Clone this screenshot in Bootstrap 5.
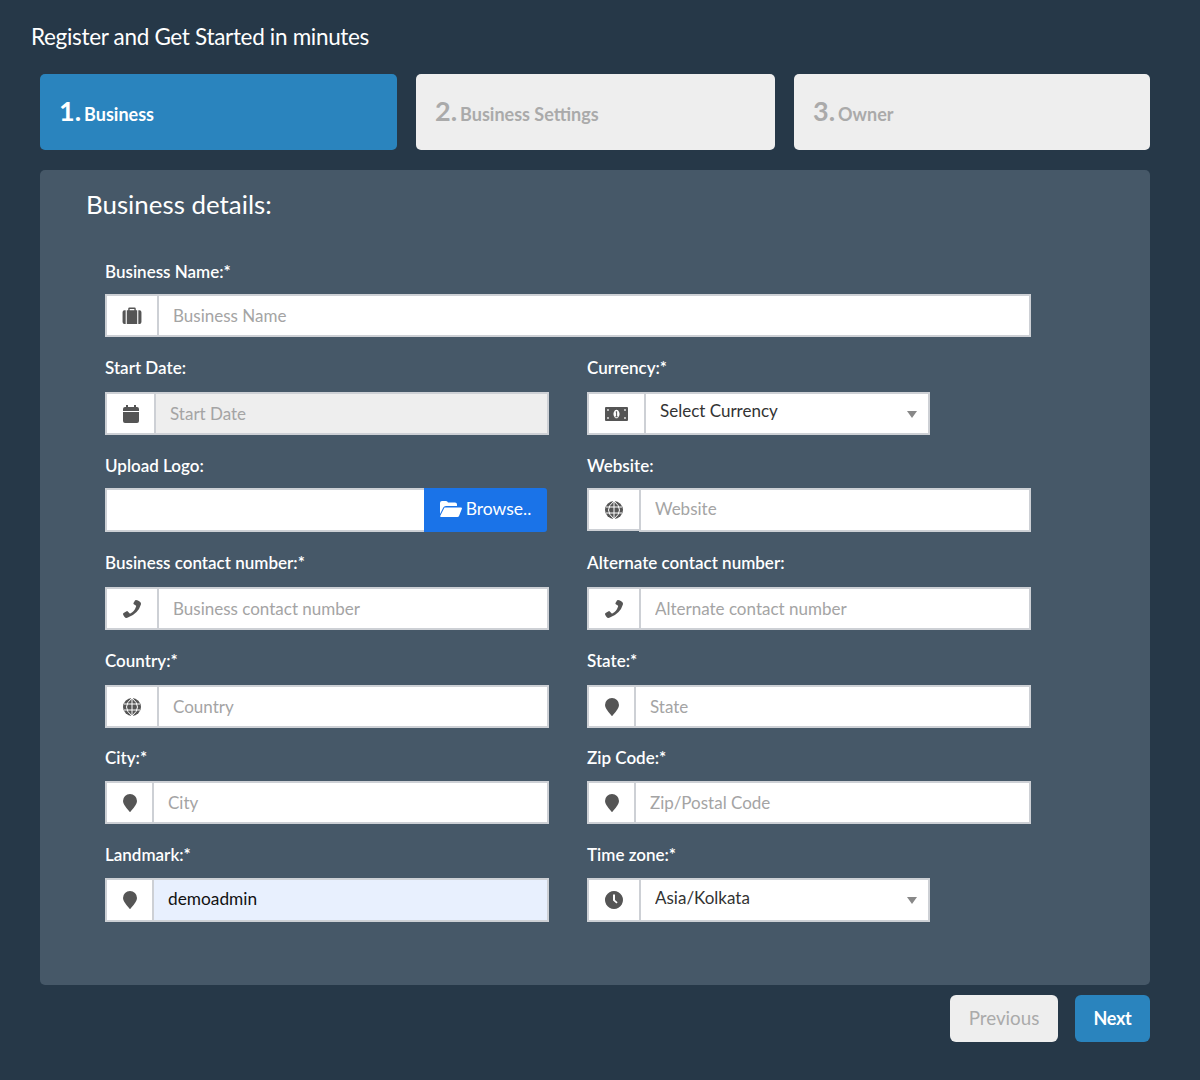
<!DOCTYPE html>
<html lang="en">
<head>
<meta charset="utf-8">
<title>Register</title>
<link href="https://cdn.jsdelivr.net/npm/bootstrap@5.3.0/dist/css/bootstrap.min.css" rel="stylesheet">
<style>
body{background:#263848;font-family:"Lato","Liberation Sans",sans-serif;color:#fff;min-height:1080px}
.page-wrap{padding:22px 50px 0 31px}
.page-title{font-size:22.5px;font-weight:400;line-height:30px;margin:0 0 22px;color:#fff;letter-spacing:-.32px}
.step-area{margin-left:9px}
.step-grid{display:grid;grid-template-columns:357px 359px 356px;gap:19px;margin-bottom:20px}
.step-box{height:76px;border-radius:5px;background:#eee;color:#aaa;display:flex;align-items:center;padding:1px 19px 0;font-weight:700;font-size:18px}
.step-box.is-on{background:#2a84be;color:#fff}
.step-num{font-size:27px;margin-right:3px;line-height:1}
.form-panel{background:#465868;border-radius:5px;height:815px;padding:15px 100px 0 46px}
.panel-title{font-size:25.9px;font-weight:400;line-height:38px;margin:0 0 39px}
.form-rows{--bs-gutter-x:38px}
.fld{font-size:17px;margin-bottom:21px}
.fld-near{margin-bottom:20px}
.fld label{display:block;font-weight:600;line-height:20px;margin-bottom:13px;color:#fff}
.tall-lab label{margin-bottom:14px}
.tight-lab label{margin-bottom:12px}
.iwrap{height:43px;flex-wrap:nowrap}
.iwrap-44{height:44px}
.iwrap .input-group-text{background:#fff;border:2px solid #cdd0d5;border-right-width:0;border-radius:0;padding:0;justify-content:center;color:#555;height:100%}
.iwrap .ad-short{height:43px}
.iwrap .form-control,.iwrap .form-select{border:2px solid #cdd0d5;border-radius:0;height:100%;font-size:17px;padding:0 14px 1px;box-shadow:none;margin-left:0!important;color:#333;font-family:inherit}
.iwrap-44 .form-control{padding-bottom:3px}
.iwrap .form-control::placeholder{color:#a4a4a4;opacity:1}
.iwrap .form-control[disabled]{background:#eee}
.iwrap .form-select{padding-bottom:5px;background-image:url("data:image/svg+xml,%3Csvg xmlns='http://www.w3.org/2000/svg' width='10' height='7'%3E%3Cpath d='M0 0h10L5 7z' fill='%23888'/%3E%3C/svg%3E");background-size:10px 7px;background-position:right 11px top 17px}
.iwrap .filled{background:#e8f0fe;color:#111;font-size:17.3px}
.ad-47{width:47px}.ad-49{width:49px}.ad-52{width:52px}.ad-57{width:57px}
.ico{display:block;fill:#555}
.pick-343{width:343px}
.browse-btn{width:123px;background:#1a73e8;border:0;color:#fff;border-radius:0 3px 3px 0;font-size:17.5px;display:flex;align-items:center;justify-content:center;gap:4px;padding:0 0 2px;flex:none}
.file-box{flex:1;background:#fff;border:2px solid #cdd0d5;border-right:0}
.upload-row{width:442px;height:44px}
.foot-bar{margin-top:10px}
.foot-btn{height:47px;border:0;border-radius:6px;font-size:18.8px;font-weight:400;padding:0}
.foot-prev{width:108px;background:#eee;color:#aaa;margin-right:17px}
.foot-next{width:75px;background:#2a84be;color:#fff;font-weight:700;font-size:18px;letter-spacing:-.3px}
</style>
</head>
<body>
<svg width="0" height="0" class="position-absolute">
<defs>
<symbol id="i-case" viewBox="0 0 20 18"><path d="M0 5.500Q0 3.500 2 3.500h1.300V18H2q-2 0-2-2zM4.500 3.500h1.500V1.800Q6 .5 7.300.5h5.400Q14 .5 14 1.800v1.700h1.500V18H4.500zM7.500 3.500h5V2h-5zM16.700 3.500H18q2 0 2 2V16q0 2-2 2h-1.300z"/></symbol>
<symbol id="i-cal" viewBox="0 0 16 18"><path d="M3 0h2v2h6V0h2v2h1q2 0 2 2v2H0V4q0-2 2-2h1zM0 7h16v9q0 2-2 2H2q-2 0-2-2z"/></symbol>
<symbol id="i-money" viewBox="0 0 23 14"><path fill-rule="evenodd" d="M1 0h21q1 0 1 1v12q0 1-1 1H1q-1 0-1-1V1q0-1 1-1zM11.500 2.800a3 4.200 0 1 0 .01 0zM2.200 2.200v1.600h1.600V2.200zM19.200 2.200v1.600h1.600V2.200zM2.200 10.200v1.600h1.600v-1.600zM19.200 10.200v1.600h1.600v-1.600z"/><path d="M11 5l1-.8h.7v5.200h.8v.8h-2.800v-.8h1V5.500z" transform="translate(-.6 0)"/></symbol>
<symbol id="i-globe" viewBox="0 0 18 18"><circle cx="9" cy="9" r="9"/><path d="M1 6h16M1 12h16M9 0v18M9 0Q3.500 4.500 3.500 9T9 18M9 0q5.500 4.500 5.500 9T9 18" fill="none" stroke="#fff" stroke-width="1"/></symbol>
<symbol id="i-phone" viewBox="0 0 18 18"><path d="M18 3.600q0 .3-.1.8-2.500 8.800-13 13.200-.6.300-1.400.3-1.200 0-2.300-1.500Q0 15 0 14q0-.5.600-.9l3-1.900q.7-.4 1.200.2l1.700 1.900q.3.300.8.100 4.200-2.200 5.800-7 .1-.5-.3-.8l-2-1.300q-.6-.5-.3-1.200L12 .6q.3-.6.900-.6 1.200 0 3 .9 2.100 1 2.100 2.700z"/></symbol>
<symbol id="i-pin" viewBox="0 0 14 18"><path d="M7 18Q6.500 18 6 17 0 10.500 0 7a7 7 0 0 1 14 0q0 3.500-6 10-.5 1-1 1z"/></symbol>
<symbol id="i-clock" viewBox="0 0 18 18"><path fill-rule="evenodd" d="M9 0a9 9 0 1 1-.01 0zM8 3.500V9.500l3.500 3 1.100-1.200L10 9V3.500z"/></symbol>
<symbol id="i-folder" viewBox="0 0 22 16"><path d="M0 13V2q0-2 2-2h4q1.500 0 2 1.500h7q2 0 2 2V5H6Q4 5 3.300 6.500z"/><path d="M4.500 6.500H21q1 0 1 1L19 15q-.4 1-1.500 1H1q-1 0-.8-1z"/></symbol>
</defs>
</svg>
<div class="page-wrap">
  <h1 class="page-title">Register and Get Started in minutes</h1>
  <div class="step-area">
    <div class="step-grid">
      <div class="step-box is-on"><div><span class="step-num">1.</span>Business</div></div>
      <div class="step-box"><div><span class="step-num">2.</span>Business Settings</div></div>
      <div class="step-box"><div><span class="step-num">3.</span>Owner</div></div>
    </div>
    <div class="form-panel">
      <h2 class="panel-title">Business details:</h2>
      <div class="row form-rows mx-0">
        <div class="col-12 fld tight-lab"><label>Business Name:*</label>
          <div class="input-group iwrap"><span class="input-group-text ad-52"><svg class="ico" width="20" height="17"><use href="#i-case"/></svg></span><input class="form-control" placeholder="Business Name"></div>
        </div>
        <div class="col-6 fld tall-lab"><label>Start Date:</label>
          <div class="input-group iwrap"><span class="input-group-text ad-49"><svg class="ico" width="16" height="18"><use href="#i-cal"/></svg></span><input class="form-control" placeholder="Start Date" disabled></div>
        </div>
        <div class="col-6 fld tall-lab"><label>Currency:*</label>
          <div class="input-group iwrap pick-343"><span class="input-group-text ad-57"><svg class="ico" width="23" height="14"><use href="#i-money"/></svg></span><select class="form-select"><option>Select Currency</option></select></div>
        </div>
        <div class="col-6 fld tight-lab"><label>Upload Logo:</label>
          <div class="d-flex upload-row"><div class="file-box"></div><button type="button" class="browse-btn"><svg width="22" height="16" fill="#fff"><use href="#i-folder"/></svg>Browse..</button></div>
        </div>
        <div class="col-6 fld tight-lab"><label>Website:</label>
          <div class="input-group iwrap iwrap-44"><span class="input-group-text ad-52 ad-short"><svg class="ico" width="18" height="18"><use href="#i-globe"/></svg></span><input class="form-control" placeholder="Website"></div>
        </div>
        <div class="col-6 fld tall-lab"><label>Business contact number:*</label>
          <div class="input-group iwrap"><span class="input-group-text ad-52"><svg class="ico" width="18" height="18"><use href="#i-phone"/></svg></span><input class="form-control" placeholder="Business contact number"></div>
        </div>
        <div class="col-6 fld tall-lab"><label>Alternate contact number:</label>
          <div class="input-group iwrap"><span class="input-group-text ad-52"><svg class="ico" width="18" height="18"><use href="#i-phone"/></svg></span><input class="form-control" placeholder="Alternate contact number"></div>
        </div>
        <div class="col-6 fld fld-near tall-lab"><label>Country:*</label>
          <div class="input-group iwrap"><span class="input-group-text ad-52"><svg class="ico" width="18" height="18"><use href="#i-globe"/></svg></span><input class="form-control" placeholder="Country"></div>
        </div>
        <div class="col-6 fld fld-near tall-lab"><label>State:*</label>
          <div class="input-group iwrap"><span class="input-group-text ad-47"><svg class="ico" width="14" height="18"><use href="#i-pin"/></svg></span><input class="form-control" placeholder="State"></div>
        </div>
        <div class="col-6 fld"><label>City:*</label>
          <div class="input-group iwrap"><span class="input-group-text ad-47"><svg class="ico" width="14" height="18"><use href="#i-pin"/></svg></span><input class="form-control" placeholder="City"></div>
        </div>
        <div class="col-6 fld"><label>Zip Code:*</label>
          <div class="input-group iwrap"><span class="input-group-text ad-47"><svg class="ico" width="14" height="18"><use href="#i-pin"/></svg></span><input class="form-control" placeholder="Zip/Postal Code"></div>
        </div>
        <div class="col-6 fld"><label>Landmark:*</label>
          <div class="input-group iwrap iwrap-44"><span class="input-group-text ad-47"><svg class="ico" width="14" height="18"><use href="#i-pin"/></svg></span><input class="form-control filled" value="demoadmin"></div>
        </div>
        <div class="col-6 fld"><label>Time zone:*</label>
          <div class="input-group iwrap iwrap-44 pick-343"><span class="input-group-text ad-52"><svg class="ico" width="18" height="18"><use href="#i-clock"/></svg></span><select class="form-select"><option>Asia/Kolkata</option></select></div>
        </div>
      </div>
    </div>
    <div class="foot-bar d-flex justify-content-end">
      <button type="button" class="foot-btn foot-prev">Previous</button>
      <button type="button" class="foot-btn foot-next">Next</button>
    </div>
  </div>
</div>
<script src="https://cdn.jsdelivr.net/npm/bootstrap@5.3.0/dist/js/bootstrap.bundle.min.js"></script>
</body>
</html>
